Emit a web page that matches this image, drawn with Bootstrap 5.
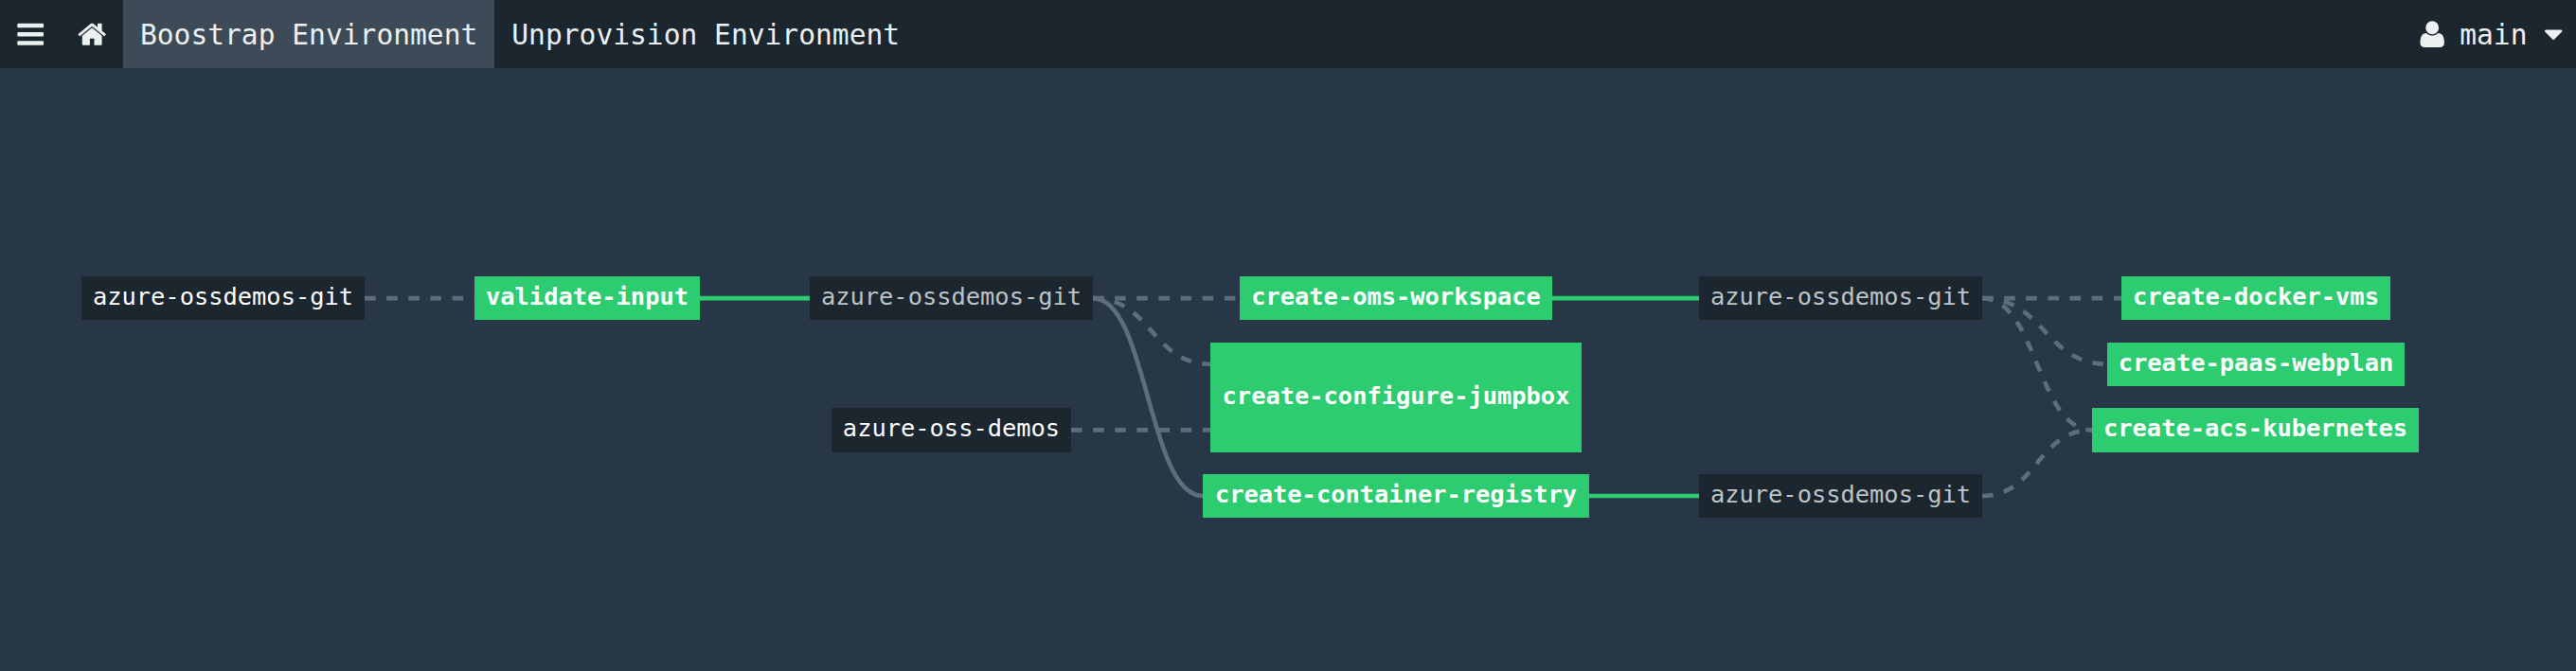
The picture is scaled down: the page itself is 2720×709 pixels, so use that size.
<!DOCTYPE html>
<html lang="en">
<head>
<meta charset="utf-8">
<title>Pipeline</title>
<link href="https://cdn.jsdelivr.net/npm/bootstrap@5.3.0/dist/css/bootstrap.min.css" rel="stylesheet">
<style>
  body { background: #273747; font-family: "DejaVu Sans Mono", "Liberation Mono", monospace; }
  .topbar { height: 72px; background: #1c262f; color: #ecf0f1; font-size: 29.6px; line-height: 72px; }
  .topbar a { color: inherit; }
  .topbar svg { width: 32.4px; height: 32.4px; fill: currentColor; flex: none; }
  .tools { padding: 0 16.9px 0 15.7px; gap: 32.6px; }
  .tab { padding: 1px 18px 0; }
  .tab.active { background: #3d4a57; }
  .user-menu { padding-right: 7.6px; }
  .user-name { margin: 1px 11.5px 0 13px; }
  .canvas { height: 637px; }
  .edges { position: absolute; left: 0; top: 0; fill: none; stroke: #5d6d7e; stroke-width: 4.63; }
  .edges .wait { stroke-dasharray: 11.57 11.57; }
  .edges .passed { stroke: #2ecc71; }
  .node { position: absolute; height: 46px; padding-bottom: 3px; font-size: 25.4px; line-height: 1; white-space: nowrap; color: #fff; background: #1c262f; }
  .node.again { color: #bdc3c7; }
  .node.job { background: #2ecc71; font-weight: 700; }
</style>
</head>
<body>
<nav class="topbar d-flex align-items-stretch">
  <div class="tools d-flex align-items-center">
    <a href="#" class="d-flex" aria-label="Menu"><svg viewBox="0 0 1792 1792"><path d="M1664 1344v128q0 26-19 45t-45 19h-1408q-26 0-45-19t-19-45v-128q0-26 19-45t45-19h1408q26 0 45 19t19 45zm0-512v128q0 26-19 45t-45 19h-1408q-26 0-45-19t-19-45v-128q0-26 19-45t45-19h1408q26 0 45 19t19 45zm0-512v128q0 26-19 45t-45 19h-1408q-26 0-45-19t-19-45v-128q0-26 19-45t45-19h1408q26 0 45 19t19 45z"/></svg></a>
    <a href="#" class="d-flex" aria-label="Home"><svg viewBox="0 0 1792 1792"><path d="M1472 992v480q0 26-19 45t-45 19h-384v-384h-256v384h-384q-26 0-45-19t-19-45v-480q0-1 .5-3t.5-3l575-474 575 474q1 2 1 6zm223-69l-62 74q-8 9-21 11h-3q-13 0-21-7l-692-577-692 577q-12 8-24 7-13-2-21-11l-62-74q-8-10-7-23.5t11-21.5l719-599q32-26 76-26t76 26l244 204v-195q0-14 9-23t23-9h192q14 0 23 9t9 23v408l219 182q10 8 11 21.5t-7 23.5z"/></svg></a>
  </div>
  <a href="#" class="tab active text-decoration-none text-nowrap">Boostrap Environment</a>
  <a href="#" class="tab text-decoration-none text-nowrap">Unprovision Environment</a>
  <div class="user-menu ms-auto d-flex align-items-center">
    <svg viewBox="0 0 1792 1792"><path d="M1600 1405q0 120-73 189.500t-194 69.500h-874q-121 0-194-69.500t-73-189.500q0-53 3.500-103.500t14-109 26.500-108.500 43-97.500 62-81 85.500-53.500 111.500-20q9 0 42 21.500t74.500 48 108 48 133.500 21.500 133.500-21.500 108-48 74.500-48 42-21.500q61 0 111.500 20t85.500 53.500 62 81 43 97.500 26.500 108.500 14 109 3.500 103.500zm-320-893q0 159-112.500 271.500t-271.500 112.500-271.500-112.500-112.500-271.500 112.500-271.500 271.500-112.500 271.500 112.500 112.500 271.500z"/></svg>
    <span class="user-name">main</span>
    <svg viewBox="0 0 1792 1792"><path d="M1408 704q0 26-19 45l-448 448q-19 19-45 19t-45-19l-448-448q-19-19-19-45t19-45 45-19h896q26 0 45 19t19 45z"/></svg>
  </div>
</nav>
<main class="canvas position-relative overflow-hidden">
  <svg class="edges" width="2720" height="637" viewBox="0 72 2720 637">
    <path class="wait" d="M385 315.100H501"/>
    <path class="passed" d="M739 315.100H855"/>
    <path class="wait" d="M1154 315.100H1309"/>
    <path class="wait" d="M1154 315.100C1216 315.100 1216 384.700 1278 384.700"/>
    <path d="M1154 315.100C1212 315.100 1212 524 1270 524"/>
    <path class="wait" d="M1131 454.400H1278"/>
    <path class="passed" d="M1639 315.100H1794"/>
    <path class="passed" d="M1678 524H1794"/>
    <path class="wait" d="M2093 315.100H2240"/>
    <path class="wait" d="M2093 315.100C2159 315.100 2159 384.700 2225 384.700"/>
    <path class="wait" d="M2093 315.100C2151 315.100 2151 454.400 2209 454.400"/>
    <path class="wait" d="M2093 524C2151 524 2151 454.400 2209 454.400"/>
  </svg>
  <div class="node d-flex align-items-center justify-content-center" style="left:86px;top:220px;width:299px">azure-ossdemos-git</div>
  <div class="node job d-flex align-items-center justify-content-center" style="left:501px;top:220px;width:238px">validate-input</div>
  <div class="node again d-flex align-items-center justify-content-center" style="left:855px;top:220px;width:299px">azure-ossdemos-git</div>
  <div class="node d-flex align-items-center justify-content-center" style="left:878px;top:359px;width:253px;height:47px">azure-oss-demos</div>
  <div class="node job d-flex align-items-center justify-content-center" style="left:1309px;top:220px;width:330px">create-oms-workspace</div>
  <div class="node job d-flex align-items-center justify-content-center" style="left:1278px;top:290px;width:392px;height:116px">create-configure-jumpbox</div>
  <div class="node job d-flex align-items-center justify-content-center" style="left:1270px;top:429px;width:408px">create-container-registry</div>
  <div class="node again d-flex align-items-center justify-content-center" style="left:1794px;top:220px;width:299px">azure-ossdemos-git</div>
  <div class="node again d-flex align-items-center justify-content-center" style="left:1794px;top:429px;width:299px">azure-ossdemos-git</div>
  <div class="node job d-flex align-items-center justify-content-center" style="left:2240px;top:220px;width:284px">create-docker-vms</div>
  <div class="node job d-flex align-items-center justify-content-center" style="left:2225px;top:290px;width:314px">create-paas-webplan</div>
  <div class="node job d-flex align-items-center justify-content-center" style="left:2209px;top:359px;width:345px;height:47px">create-acs-kubernetes</div>
</main>
<script src="https://cdn.jsdelivr.net/npm/bootstrap@5.3.0/dist/js/bootstrap.bundle.min.js"></script>
</body>
</html>
